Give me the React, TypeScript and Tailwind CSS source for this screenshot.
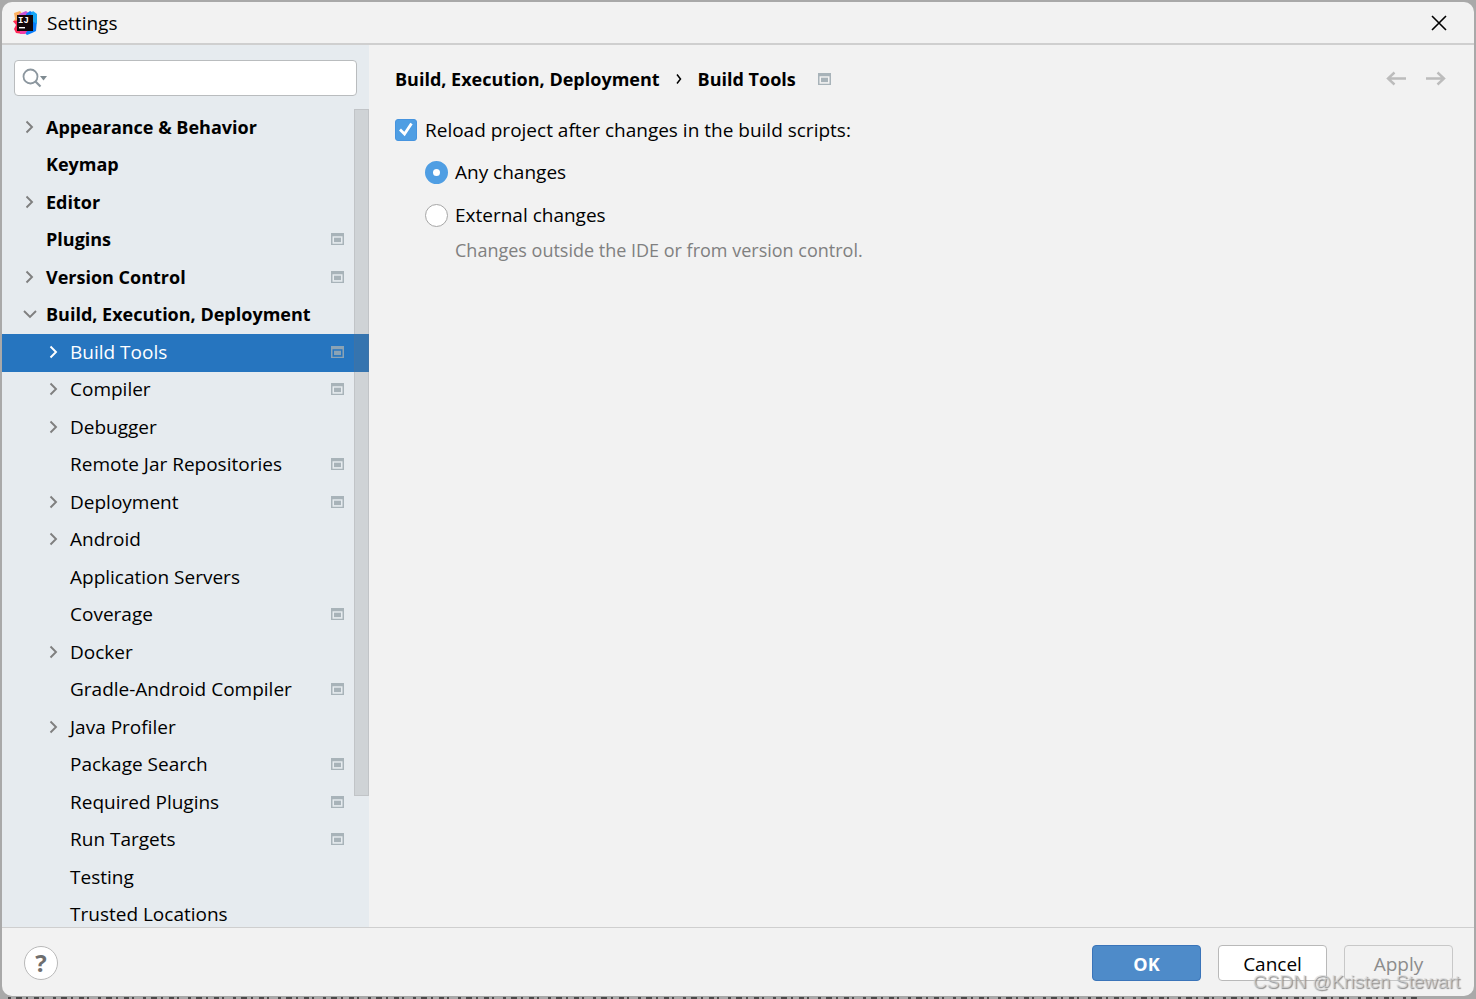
import React, { useState } from "react";
import clsx from "clsx";

type TreeItem = {
  label: string;
  level: 0 | 1;
  state?: "open" | "closed";
  project?: boolean;
};

const items: TreeItem[] = [
  { label: "Appearance & Behavior", level: 0, state: "closed" },
  { label: "Keymap", level: 0 },
  { label: "Editor", level: 0, state: "closed" },
  { label: "Plugins", level: 0, project: true },
  { label: "Version Control", level: 0, state: "closed", project: true },
  { label: "Build, Execution, Deployment", level: 0, state: "open" },
  { label: "Build Tools", level: 1, state: "closed", project: true },
  { label: "Compiler", level: 1, state: "closed", project: true },
  { label: "Debugger", level: 1, state: "closed" },
  { label: "Remote Jar Repositories", level: 1, project: true },
  { label: "Deployment", level: 1, state: "closed", project: true },
  { label: "Android", level: 1, state: "closed" },
  { label: "Application Servers", level: 1 },
  { label: "Coverage", level: 1, project: true },
  { label: "Docker", level: 1, state: "closed" },
  { label: "Gradle-Android Compiler", level: 1, project: true },
  { label: "Java Profiler", level: 1, state: "closed" },
  { label: "Package Search", level: 1, project: true },
  { label: "Required Plugins", level: 1, project: true },
  { label: "Run Targets", level: 1, project: true },
  { label: "Testing", level: 1 },
  { label: "Trusted Locations", level: 1 },
];

const Logo: React.FC = () => (
  <svg width="24" height="24" viewBox="0 0 24 24" aria-hidden="true">
    <path d="M1 2 7 0 12 6 8 13 0 11 2 8Z" fill="#fdb060" />
    <path d="M6 3 13 0 17 3 14 8 5 8Z" fill="#c757d8" />
    <path d="M0 10 6 9 12 18 10 23 3 22 1 18 3 14Z" fill="#fe2857" />
    <path d="M13 3 17 0 23 3 24 9 23 20 19 22 14 24 9 19 14 12Z" fill="#087cfa" />
    <path d="M18 2 20 0 24 3 24 13 19 10Z" fill="#18a6f5" />
    <path d="M7 19 15 19 12 23 7 23Z" fill="#f43ba5" />
    <rect x="4" y="4" width="16" height="16" fill="#120609" />
    <text x="5" y="12" fill="#fff" fontSize="9" fontWeight="700" fontFamily="Liberation Mono, monospace">IJ</text>
    <rect x="6" y="16" width="6" height="1.4" fill="#fff" />
  </svg>
);

const Chevron: React.FC<{ open?: boolean }> = ({ open }) => (
  <svg width="16" height="16" viewBox="0 0 16 16" fill="none" stroke="currentColor" strokeWidth="1.9" aria-hidden="true">
    {open ? <path d="M2 5 8 11 14 5" /> : <path d="M4.5 2.5 10 8 4.5 13.5" />}
  </svg>
);

const ProjectIcon: React.FC<{ className?: string }> = ({ className }) => (
  <svg className={className} width="13" height="12" viewBox="0 0 13 12" aria-hidden="true">
    <path fillRule="evenodd" fill="currentColor" d="M0 0H13V12H0ZM1.5 3.3V10.7H11.5V3.3Z" />
    <rect x="3" y="4.7" width="7" height="4.4" fill="currentColor" />
  </svg>
);

const Arrow: React.FC<{ forward?: boolean }> = ({ forward }) => (
  <svg width="20" height="16" viewBox="0 0 20 16" fill="none" stroke="#bcbcbc" strokeWidth="2.4" aria-hidden="true">
    {forward ? <path d="M0 7.5H18M11.5 1.5 18 7.5 11.5 13.5" /> : <path d="M20 7.5H2M8.5 1.5 2 7.5 8.5 13.5" />}
  </svg>
);

const App: React.FC = () => {
  const [selected, setSelected] = useState("Build Tools");
  const [reload, setReload] = useState(true);
  const [mode, setMode] = useState("any");

  return (
    <div className="relative h-screen overflow-hidden bg-[#a9a9a9] px-[2px] pt-[2px] pb-[3px] font-['Open_Sans','Noto_Sans',sans-serif] text-[19px] leading-6 text-black">
      <div className="flex h-full flex-col overflow-hidden rounded-[10px] bg-[#f2f2f2]">
        {/* Title bar */}
        <header className="flex h-[43px] shrink-0 items-center justify-between border-b-2 border-[#cfcfcf] pr-[27px] pl-[11px]">
          <div className="flex items-center gap-[10px]">
            <Logo />
            <h1>Settings</h1>
          </div>
          <button type="button" aria-label="Close">
            <svg width="16" height="16" viewBox="0 0 16 16" stroke="#000" strokeWidth="1.6" aria-hidden="true">
              <path d="M1 1 15 15M15 1 1 15" />
            </svg>
          </button>
        </header>

        <div className="flex min-h-0 flex-1">
          {/* Sidebar */}
          <aside className="flex w-[367px] shrink-0 flex-col bg-[#e6ebef]">
            <div className="px-3 pt-[15px] pb-[13px]">
              <label className="flex h-9 items-center rounded-[4px] border border-[#b9bcbe] bg-white px-[7px]">
                <svg width="26" height="20" viewBox="0 0 26 20" fill="none" aria-hidden="true">
                  <circle cx="8.5" cy="8.5" r="7" stroke="#8c979f" strokeWidth="1.8" />
                  <path d="M13.5 13.5 18.5 18.5" stroke="#8c979f" strokeWidth="2.2" />
                  <path d="M18 8H25L21.5 12.5Z" fill="#7f8b91" />
                </svg>
                <input type="text" aria-label="Search settings" className="min-w-0 flex-1 bg-transparent outline-none" />
              </label>
            </div>
            <nav className="relative min-h-0 flex-1 overflow-hidden">
              <ul>
                {items.map((item) => (
                  <li key={item.label} className="group h-[37px] odd:h-[38px]">
                    <button
                      type="button"
                      onClick={() => setSelected(item.label)}
                      className={clsx(
                        "flex h-full w-full items-center pr-[25px] pb-[3px] text-left group-odd:pb-[2px]",
                        item.level === 0 ? "pl-5 text-[18px] font-bold" : "pl-11",
                        selected === item.label && "bg-[#2675bf] text-white"
                      )}
                    >
                      <span className={clsx("w-6 shrink-0", selected === item.label ? "text-white" : "text-[#7f7f7f]")}>
                        {item.state && <Chevron open={item.state === "open"} />}
                      </span>
                      <span className="flex-1 whitespace-nowrap">{item.label}</span>
                      {item.project && (
                        <ProjectIcon className={selected === item.label ? "text-[#8ba3b5]" : "text-[#a8b3b9]"} />
                      )}
                    </button>
                  </li>
                ))}
              </ul>
              <div className="absolute top-0 right-0 h-[84%] w-[15px] border border-[#737373]/15 bg-[#737373]/20" />
            </nav>
          </aside>

          {/* Page */}
          <main className="flex-1 pt-[22px] pr-7 pl-[26px]">
            <div className="flex items-center justify-between">
              <div className="flex items-center text-[18px] font-bold">
                <a href="#build">Build, Execution, Deployment</a>
                <svg className="mx-4" width="6" height="10" viewBox="0 0 6 10" fill="none" stroke="#000" strokeWidth="1.5" aria-hidden="true">
                  <path d="M1 0.5 4.5 5 1 9.5" />
                </svg>
                <h2>Build Tools</h2>
                <ProjectIcon className="ml-[22px] text-[#a8b3b9]" />
              </div>
              <div className="flex gap-5">
                <button type="button" aria-label="Back"><Arrow /></button>
                <button type="button" aria-label="Forward"><Arrow forward /></button>
              </div>
            </div>

            <label className="mt-[27px] flex items-center gap-2">
              <span className="relative flex">
                <input
                  type="checkbox"
                  checked={reload}
                  onChange={(e) => setReload(e.target.checked)}
                  className="size-[22px] appearance-none rounded-[3px] border border-[#b0b0b0] bg-white checked:border-[#4694df] checked:bg-[#4f9ee3]"
                />
                {reload && (
                  <svg className="pointer-events-none absolute inset-0" width="22" height="22" viewBox="0 0 22 22" fill="none" stroke="#fff" strokeWidth="2.8" aria-hidden="true">
                    <path d="M5 10.5 9.5 15 16.5 4.5" />
                  </svg>
                )}
              </span>
              Reload project after changes in the build scripts:
            </label>

            <div className="mt-[18px] ml-[30px] flex flex-col gap-[19px]">
              <label className="flex items-center gap-[7px]">
                <input
                  type="radio"
                  name="mode"
                  checked={mode === "any"}
                  onChange={() => setMode("any")}
                  className="size-[23px] appearance-none rounded-full border border-[#a6a6a6] bg-white checked:border-8 checked:border-[#4f9ee3]"
                />
                Any changes
              </label>
              <label className="flex items-center gap-[7px]">
                <input
                  type="radio"
                  name="mode"
                  checked={mode === "external"}
                  onChange={() => setMode("external")}
                  className="size-[23px] appearance-none rounded-full border border-[#a6a6a6] bg-white checked:border-8 checked:border-[#4f9ee3]"
                />
                External changes
              </label>
            </div>
            <p className="mt-[11px] ml-[60px] text-[18px] text-[#808080]">Changes outside the IDE or from version control.</p>
          </main>
        </div>

        {/* Footer */}
        <footer className="flex h-[69px] shrink-0 items-center justify-between border-t border-[#cfcfcf] pt-[2px] pr-[21px] pl-[22px]">
          <button type="button" aria-label="Help" className="size-[34px] rounded-full border border-[#b9b9b9] bg-white text-[24px] leading-8 font-bold text-[#6e6e6e]">
            ?
          </button>
          <div className="flex gap-[17px]">
            <button type="button" className="h-9 w-[109px] rounded-[4px] border border-[#3a74b9] bg-[#4e8bc9] pt-[2px] text-[18px] font-bold text-white">OK</button>
            <button type="button" className="h-9 w-[109px] rounded-[4px] border border-[#b9b9b9] bg-white pt-[2px]">Cancel</button>
            <button type="button" disabled className="h-9 w-[109px] rounded-[4px] border border-[#c8c8c8] pt-[2px] text-[#8c8c8c]">Apply</button>
          </div>
        </footer>
      </div>
      <span className="pointer-events-none absolute right-4 bottom-[5px] font-['Liberation_Sans',sans-serif] text-[19px] text-[#d8d8d8]/60 [text-shadow:1px_1px_1px_#8a8a8a]">
        CSDN @Kristen Stewart
      </span>
      {/* Sliver of the editor window behind the dialog */}
      <svg className="absolute inset-x-0 bottom-0 h-[2px] w-full" aria-hidden="true">
        <line x1="8" y1="1" x2="96%" y2="1" stroke="#4a4a4a" strokeWidth="2" strokeDasharray="3 5 6 4 2 6 5 3 2 9" />
      </svg>
    </div>
  );
};

export default App;
